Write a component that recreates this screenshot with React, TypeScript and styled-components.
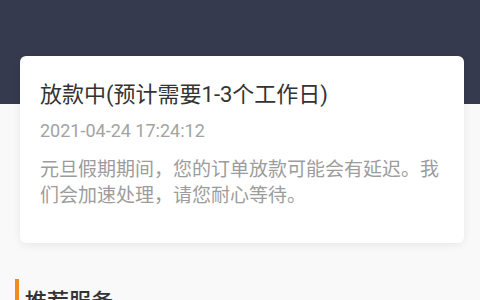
import React from 'react';
import styled, { createGlobalStyle } from 'styled-components';

const GlobalStyle = createGlobalStyle`
  html, body {
    margin: 0;
    padding: 0;
    background-color: #f9f9f9;
    font-family: Roboto, "Noto Sans CJK SC", sans-serif;
  }
`;

const Page = styled.div`
  display: flex;
  flex-direction: column;
  width: 480px;
  height: 300px;
  overflow: hidden;
  background-color: #f9f9f9;
`;

const Header = styled.div`
  height: 104px;
  flex-shrink: 0;
  background-color: #363a4f;
`;

const StatusCard = styled.div`
  display: flex;
  flex-direction: column;
  margin: -48px 16px 0 20px;
  padding: 24px 20px 35px 20px;
  background-color: #fff;
  border-radius: 6px;
  box-shadow: 0 2px 10px rgba(0, 0, 0, 0.07);
`;

const Title = styled.div`
  font-size: 22px;
  line-height: 30px;
  color: #333;
`;

const Time = styled.div`
  margin-top: 8px;
  font-size: 18px;
  line-height: 26px;
  color: #a3a3a3;
`;

const Notice = styled.div`
  margin-top: 13px;
  font-size: 19px;
  line-height: 25.5px;
  color: #9c9c9c;
`;

const SectionTitle = styled.div<{ accent: string }>`
  margin: 36px 0 0 15px;
  padding: 8px 0 0 6px;
  border-left: 4px solid ${({ accent }) => accent};
  font-size: 22px;
  line-height: 30px;
  font-weight: 500;
  color: #333;
`;

const App = () => {
  return (
    <>
      <GlobalStyle />
      <Page>
        <Header />
        <StatusCard>
          <Title>放款中(预计需要1-3个工作日)</Title>
          <Time>2021-04-24 17:24:12</Time>
          <Notice>元旦假期期间，您的订单放款可能会有延迟。我们会加速处理，请您耐心等待。</Notice>
        </StatusCard>
        <SectionTitle accent="#f28b1c">推荐服务</SectionTitle>
      </Page>
    </>
  );
};

export default App;
